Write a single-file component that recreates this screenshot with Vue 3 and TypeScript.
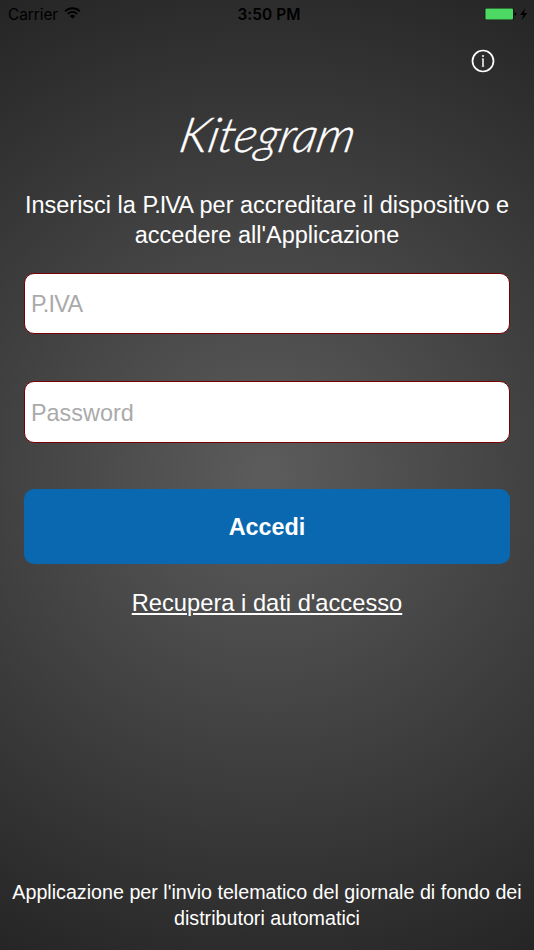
<script setup lang="ts">
import { ref } from 'vue'

interface Field {
  id: string
  label: string
  type: 'text' | 'password'
}

const fields: Field[] = [
  { id: 'piva', label: 'P.IVA', type: 'text' },
  { id: 'password', label: 'Password', type: 'password' },
]

const values = ref<Record<string, string>>({ piva: '', password: '' })
</script>

<template>
  <main class="screen">
    <header class="status">
      <div class="carrier">
        <span class="carrier-name">Carrier</span>
        <svg class="wifi" width="17" height="12" viewBox="0 0 17 12" fill="none" stroke="#000" stroke-width="1.8">
          <path d="M1.2 4.3a10.3 10.3 0 0 1 14.6 0" />
          <path d="M3.8 6.9a6.6 6.6 0 0 1 9.4 0" />
          <path d="M8.5 11.7 5.9 9.1a3.7 3.7 0 0 1 5.2 0z" fill="#000" stroke="none" />
        </svg>
      </div>
      <span class="time">3:50 PM</span>
      <div class="power">
        <svg width="44" height="14" viewBox="0 0 44 14">
          <rect x="-.2" y="1" width="29" height="12" rx="1.8" fill="#111" />
          <rect x=".4" y="1.6" width="27.6" height="10.8" rx="1" fill="#4cd964" />
          <path d="M29.6 5.2c1.2.3 1.8.9 1.8 1.8s-.6 1.5-1.8 1.8z" fill="#000" />
          <path d="M40 1.2 35.2 8h3.1l-1.5 4.9 5.6-7h-3.4z" fill="#000" />
        </svg>
      </div>
    </header>

    <nav class="toolbar">
      <button class="info" type="button" aria-label="Info">
        <svg width="24" height="24" viewBox="0 0 24 24" fill="none" stroke="#fff">
          <circle cx="12" cy="12" r="10.5" stroke-width="1.7" />
          <path d="M12 9.6v8" stroke-width="1.5" />
          <path d="M10.9 9.9h1.2M10.7 17.3h2.6" stroke-width=".6" />
          <circle cx="12" cy="6.9" r="1" fill="#fff" stroke="none" />
        </svg>
      </button>
    </nav>

    <h1 class="brand">Kitegram</h1>

    <p class="intro">
      Inserisci la <span class="tight">P.IVA</span> per accreditare il dispositivo e<br />
      accedere all'Applicazione
    </p>

    <form class="form" @submit.prevent>
      <input
        v-for="field in fields"
        :key="field.id"
        v-model="values[field.id]"
        class="field"
        :class="field.id"
        :type="field.type"
        :placeholder="field.label"
      />
      <button class="submit" type="submit">Accedi</button>
    </form>

    <a class="recover" href="#">Recupera i dati d'accesso</a>

    <footer class="about">
      Applicazione per l'invio telematico del giornale di fondo dei<br />
      distributori automatici
    </footer>
  </main>
</template>

<style>
body {
  margin: 0;
  background: #262626;
}
</style>

<style scoped>
.screen {
  box-sizing: border-box;
  display: flex;
  flex-direction: column;
  height: 950px;
  overflow: hidden;
  color: #fff;
  font-family: "Liberation Sans", Helvetica, Arial, sans-serif;
  background: radial-gradient(circle at 50% 50%, #5c5c5c 0, #252525 545px);
}
.status {
  display: grid;
  grid-template-columns: 1fr auto 1fr;
  align-items: center;
  height: 28px;
  padding: 0 6px 0 8px;
  color: #000;
  font-family: Inter, "Liberation Sans", sans-serif;
  font-size: 15.4px;
}
.carrier {
  display: flex;
  align-items: center;
  gap: 6px;
}
.carrier-name {
  letter-spacing: -0.05px;
}
.wifi {
  margin-top: -3px;
}
.time {
  padding-left: 2px;
  font-weight: 600;
  letter-spacing: 0.1px;
}
.power {
  display: flex;
  justify-content: flex-end;
  margin-right: -1px;
  margin-top: -1px;
}
.power svg {
  display: block;
  overflow: visible;
}
.toolbar {
  display: flex;
  justify-content: flex-end;
  padding: 20px 39px 0 0;
}
.info {
  width: 24px;
  height: 25px;
  padding: 0;
  border: 0;
  background: none;
}
.info svg {
  display: block;
}
.brand {
  margin: 30px 0 0;
  height: 77px;
  font: italic 300 48px/62px "Snell Roundhand", Lato, sans-serif;
  text-align: center;
  transform: skewX(-12deg);
  -webkit-text-stroke: 0.4px #fff;
}
.intro {
  margin: 10px 0 0;
  font-size: 23.5px;
  line-height: 30px;
  text-align: center;
  white-space: nowrap;
}
.tight {
  letter-spacing: -0.95px;
}
.form {
  display: flex;
  flex-direction: column;
  margin: 23px 24px 0;
}
.field {
  box-sizing: border-box;
  width: 100%;
  height: 61px;
  margin-bottom: 47px;
  padding: 1px 6px 0;
  border: 1px solid #780000;
  border-radius: 10px;
  outline: 0;
  background: #fff;
  color: #222;
  font: 23.4px "Liberation Sans", Helvetica, Arial, sans-serif;
}
.field::placeholder {
  color: #aaa;
  opacity: 1;
}
.piva::placeholder {
  letter-spacing: -0.75px;
}
.password {
  height: 62px;
  margin-bottom: 46px;
  padding-top: 2px;
}
.submit {
  height: 75px;
  padding: 1px 0 0;
  border: 0;
  border-radius: 10px;
  background: #0968af;
  color: #fff;
  font: bold 23.4px "Liberation Sans", Helvetica, Arial, sans-serif;
}
.recover {
  align-self: center;
  margin-top: 24px;
  color: #fff;
  font-size: 23.7px;
  line-height: 30px;
  text-decoration-thickness: 1.5px;
  text-underline-offset: 2px;
}
.about {
  margin: auto 0 19px;
  font-size: 19.7px;
  line-height: 26px;
  text-align: center;
  white-space: nowrap;
}
</style>
